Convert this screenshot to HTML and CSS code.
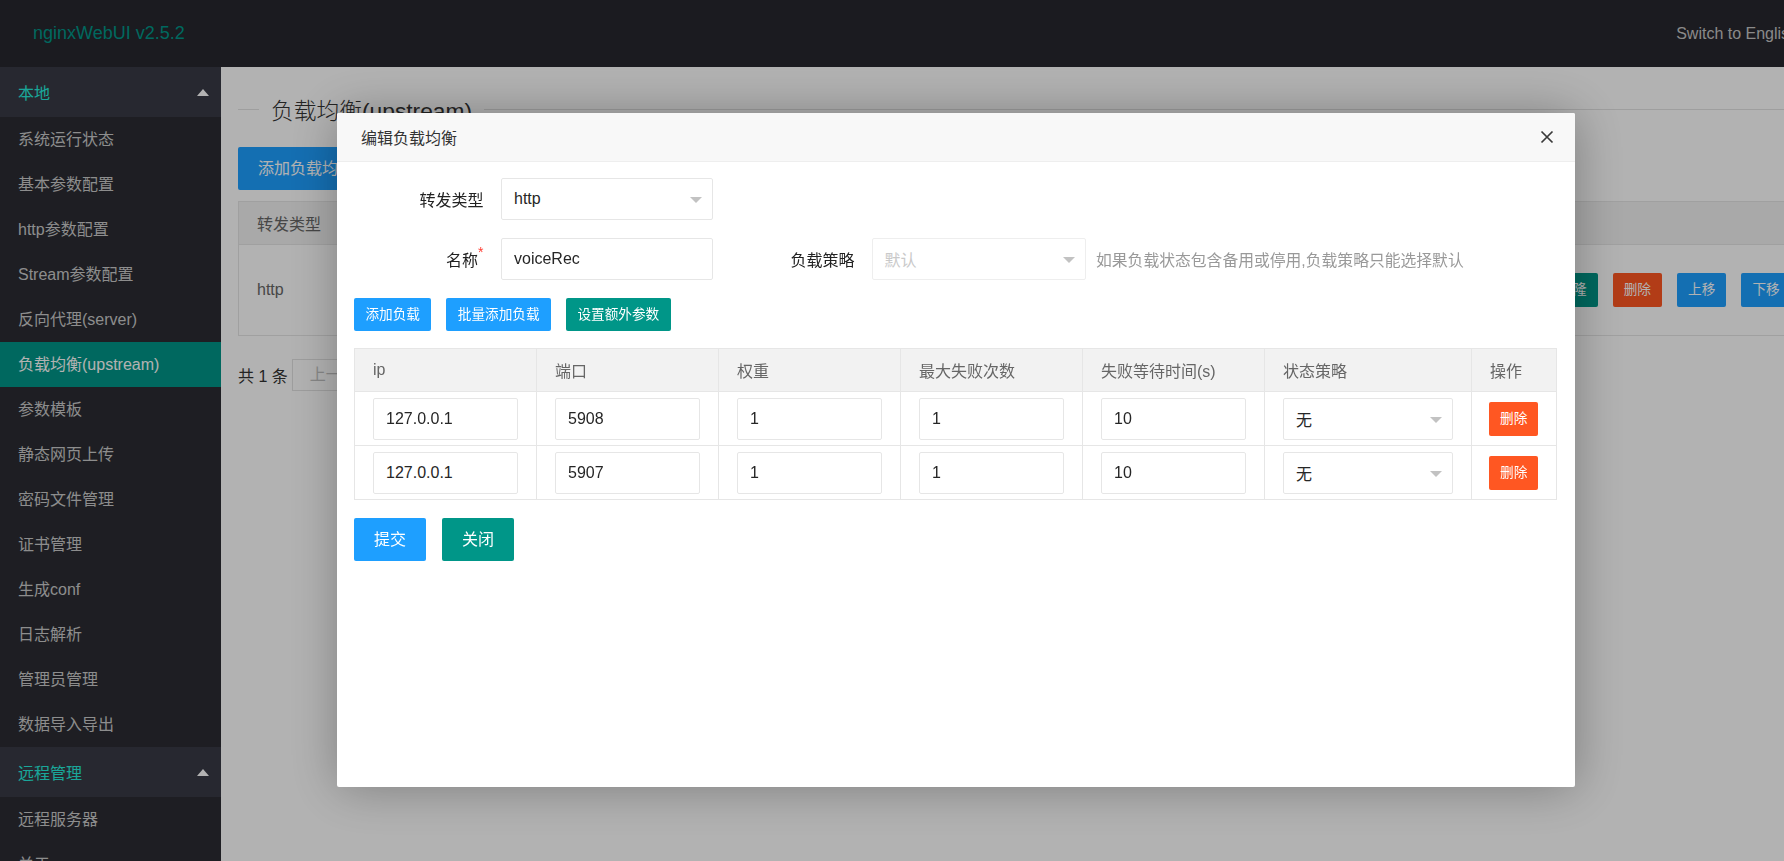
FILE: index.html
```html
<!DOCTYPE html>
<html lang="zh-CN">

<head>
  <meta charset="utf-8">
  <title>nginxWebUI</title>
  <link rel="stylesheet" href="styles.css">
</head>

<body>
  <div class="layout">
    <div class="header">
      <div class="logo">nginxWebUI v2.5.2</div>
      <div class="lang">Switch to English</div>
    </div>

    <div class="side">
      <div class="navTitle">本地</div>
      <div class="navItem">系统运行状态</div>
      <div class="navItem">基本参数配置</div>
      <div class="navItem">http参数配置</div>
      <div class="navItem">Stream参数配置</div>
      <div class="navItem">反向代理(server)</div>
      <div class="navItem active">负载均衡(upstream)</div>
      <div class="navItem">参数模板</div>
      <div class="navItem">静态网页上传</div>
      <div class="navItem">密码文件管理</div>
      <div class="navItem">证书管理</div>
      <div class="navItem">生成conf</div>
      <div class="navItem">日志解析</div>
      <div class="navItem">管理员管理</div>
      <div class="navItem">数据导入导出</div>
      <div class="navTitle">远程管理</div>
      <div class="navItem">远程服务器</div>
      <div class="navItem">关于</div>
    </div>

    <div class="main">
      <div class="pageTitle"><span>负载均衡(upstream)</span></div>
      <div>
        <span class="btn addBtn">添加负载均衡</span>
      </div>
      <table class="listTable">
        <colgroup>
          <col style="width: 220px">
          <col style="width: 400px">
          <col style="width: 300px">
          <col style="width: 307px">
          <col>
        </colgroup>
        <thead>
          <tr>
            <th>转发类型</th>
            <th>名称</th>
            <th>负载策略</th>
            <th>负载节点</th>
            <th>操作</th>
          </tr>
        </thead>
        <tbody>
          <tr>
            <td>http</td>
            <td>voiceRec</td>
            <td>默认</td>
            <td>127.0.0.1:5908</td>
            <td class="opCell">
              <span class="smBtn blue">编辑</span>
              <span class="smBtn teal">克隆</span>
              <span class="smBtn red">删除</span>
              <span class="smBtn blue">上移</span>
              <span class="smBtn blue">下移</span>
            </td>
          </tr>
        </tbody>
      </table>
      <div class="pager">
        <span>共 1 条</span>
        <span class="pageBox">上一页</span>
      </div>
    </div>
  </div>

  <div class="shade"></div>

  <div class="dialog">
    <div class="dialogTitle">
      <span>编辑负载均衡</span>
      <span class="close">
        <svg width="14" height="14" viewBox="0 0 14 14">
          <path d="M1.5 1.5 L12.5 12.5 M12.5 1.5 L1.5 12.5" stroke="#3a3a3a" stroke-width="1.7" fill="none" />
        </svg>
      </span>
    </div>
    <div class="dialogBody">
      <div class="formRow">
        <label class="formLabel">转发类型</label>
        <div class="field select"><span>http</span></div>
      </div>
      <div class="formRow">
        <label class="formLabel">名称<span class="req">*</span></label>
        <input class="field" type="text" value="voiceRec">
        <label class="formLabel wide">负载策略</label>
        <div class="field select disabled"><span>默认</span></div>
        <span class="hint">如果负载状态包含备用或停用,负载策略只能选择默认</span>
      </div>
      <div class="toolBtns">
        <span class="smBtn blue">添加负载</span>
        <span class="smBtn blue">批量添加负载</span>
        <span class="smBtn teal">设置额外参数</span>
      </div>

      <table class="nodeTable">
        <colgroup>
          <col style="width: 182px">
          <col style="width: 182px">
          <col style="width: 182px">
          <col style="width: 182px">
          <col style="width: 182px">
          <col style="width: 207px">
          <col>
        </colgroup>
        <thead>
          <tr>
            <th>ip</th>
            <th>端口</th>
            <th>权重</th>
            <th>最大失败次数</th>
            <th>失败等待时间(s)</th>
            <th>状态策略</th>
            <th>操作</th>
          </tr>
        </thead>
        <tbody>
          <tr>
            <td><input class="field cellField" type="text" value="127.0.0.1"></td>
            <td><input class="field cellField" type="text" value="5908"></td>
            <td><input class="field cellField" type="text" value="1"></td>
            <td><input class="field cellField" type="text" value="1"></td>
            <td><input class="field cellField" type="text" value="10"></td>
            <td><div class="field cellField select"><span>无</span></div></td>
            <td class="opCol"><span class="smBtn red">删除</span></td>
          </tr>
          <tr>
            <td><input class="field cellField" type="text" value="127.0.0.1"></td>
            <td><input class="field cellField" type="text" value="5907"></td>
            <td><input class="field cellField" type="text" value="1"></td>
            <td><input class="field cellField" type="text" value="1"></td>
            <td><input class="field cellField" type="text" value="10"></td>
            <td><div class="field cellField select"><span>无</span></div></td>
            <td class="opCol"><span class="smBtn red">删除</span></td>
          </tr>
        </tbody>
      </table>

      <div class="footBtns">
        <span class="btn blue">提交</span>
        <span class="btn teal">关闭</span>
      </div>
    </div>
  </div>
</body>

</html>
```

FILE: styles.css
```css
html,
body {
  margin: 0;
  padding: 0;
  overflow: hidden;
}

body {
  font-family: "Liberation Sans", "Noto Sans CJK SC", sans-serif;
  font-size: 16px;
  color: #333;
  background: #fff;
}

.layout {
  width: 1830px;
  height: 100vh;
  display: grid;
  grid-template-columns: 221px 1fr;
  grid-template-rows: 67px 1fr;
}

/* top bar */
.header {
  grid-column: 1 / 3;
  display: flex;
  align-items: center;
  justify-content: space-between;
  background: #27282f;
}

.logo {
  padding-left: 33px;
  font-size: 18px;
  color: #009688;
}

.lang {
  padding-right: 33px;
  font-size: 16px;
  color: #c6c6c6;
}

/* left menu */
.side {
  background: #2b2c33;
  overflow: hidden;
}

.navTitle {
  height: 50px;
  display: flex;
  align-items: center;
  justify-content: space-between;
  padding: 0 12px 0 18px;
  background: #383a46;
  color: #26eedd;
}

.navTitle::after {
  content: "";
  width: 0;
  height: 0;
  border-left: 6.5px solid transparent;
  border-right: 6.5px solid transparent;
  border-bottom: 7px solid #fff;
}

.navItem {
  height: 45px;
  line-height: 45px;
  padding-left: 18px;
  color: #cacaca;
  white-space: nowrap;
}

.navItem.active {
  background: #009688;
  color: #fff;
}

/* page behind the dialog */
.main {
  padding: 0 17px;
}

.pageTitle {
  display: flex;
  align-items: center;
  height: 30px;
  margin-top: 27px;
  font-size: 22.75px;
  font-weight: 300;
  color: #333;
}

.pageTitle::before {
  content: "";
  width: 21px;
  border-top: 1px solid #e2e2e2;
}

.pageTitle::after {
  content: "";
  flex: 1;
  border-top: 1px solid #e2e2e2;
}

.pageTitle span {
  padding: 0 12px;
}

.btn {
  display: inline-block;
  height: 43px;
  line-height: 43px;
  padding: 0 20px;
  border-radius: 2px;
  color: #fff;
  font-size: 16px;
  white-space: nowrap;
}

.addBtn {
  margin-top: 23px;
  background: #1e9fff;
}

.listTable {
  width: 1576px;
  margin-top: 11px;
  border-collapse: collapse;
  table-layout: fixed;
}

.listTable th,
.listTable td {
  border: 1px solid #e6e6e6;
  padding: 0 18px;
  text-align: left;
  font-weight: normal;
  color: #666;
  white-space: nowrap;
  overflow: hidden;
}

.listTable th {
  height: 42px;
  background: #f2f2f2;
}

.listTable td {
  height: 90px;
}

.listTable .opCell {
  padding-left: 18px;
}

.smBtn {
  display: inline-block;
  height: 34px;
  line-height: 34px;
  padding: 0 11px;
  border-radius: 2px;
  color: #fff;
  font-size: 13.65px;
  vertical-align: middle;
  white-space: nowrap;
}

.opCell .smBtn + .smBtn {
  margin-left: 10.6px;
}

.blue {
  background: #1e9fff;
}

.teal {
  background: #009688;
}

.red {
  background: #ff5722;
}

.pager {
  display: flex;
  align-items: center;
  margin-top: 23px;
  gap: 4px;
}

.pageBox {
  height: 30px;
  line-height: 30px;
  padding: 0 17px;
  border: 1px solid #e2e2e2;
  color: #c2c2c2;
}

/* modal shade + dialog */
.shade {
  position: fixed;
  left: 0;
  top: 0;
  right: 0;
  bottom: 0;
  background: rgba(0, 0, 0, .3);
}

.dialog {
  position: fixed;
  left: 337px;
  top: 113px;
  width: 1238px;
  height: 674px;
  background: #fff;
  border-radius: 2px;
  box-shadow: 1px 1px 50px rgba(0, 0, 0, .3);
}

.dialogTitle {
  height: 48px;
  display: flex;
  align-items: center;
  padding: 0 21px 0 24px;
  background: #f8f8f8;
  border-bottom: 1px solid #eee;
  border-radius: 2px 2px 0 0;
  color: #333;
}

.close {
  margin-left: auto;
  display: flex;
}

.dialogBody {
  padding: 16px 18px 0 17px;
}

.formRow {
  display: flex;
  align-items: center;
  margin-bottom: 18px;
}

.formLabel {
  width: 147px;
  box-sizing: border-box;
  padding-right: 17.5px;
  text-align: right;
  color: #222;
}

.formLabel.wide {
  width: 158.5px;
  padding-right: 17px;
}

.req {
  color: #ff3b30;
  font-size: 14px;
  vertical-align: top;
  position: relative;
  top: -3px;
}

.field {
  width: 212px;
  height: 42px;
  box-sizing: border-box;
  margin: 0;
  padding: 0 12px;
  border: 1px solid #e6e6e6;
  border-radius: 2px;
  background: #fff;
  font-family: inherit;
  font-size: 16px;
  color: #262626;
  outline: none;
}

.select {
  position: relative;
  display: flex;
  align-items: center;
}

.select::after {
  content: "";
  position: absolute;
  right: 10px;
  top: 18px;
  border-left: 6.5px solid transparent;
  border-right: 6.5px solid transparent;
  border-top: 6.5px solid #c2c2c2;
}

.select.disabled {
  width: 214px;
  border-color: #eee;
  color: #c9c9c9;
}

.hint {
  margin-left: 10.5px;
  font-size: 15.8px;
  color: #999;
  white-space: nowrap;
}

.toolBtns {
  display: flex;
  gap: 15px;
  margin-bottom: 17px;
}

.toolBtns .smBtn {
  height: 33px;
  line-height: 33px;
  padding: 0 11.4px;
}

.nodeTable {
  width: 100%;
  border-collapse: collapse;
  table-layout: fixed;
}

.nodeTable th,
.nodeTable td {
  border: 1px solid #e6e6e6;
  padding: 0 18px;
  text-align: left;
}

.nodeTable th {
  height: 42px;
  background: #f2f2f2;
  font-weight: normal;
  color: #666;
  white-space: nowrap;
}

.nodeTable td {
  height: 53px;
}

.nodeTable td.opCol {
  padding-left: 17px;
}

.cellField {
  width: 100%;
}

.footBtns {
  display: flex;
  gap: 16px;
  margin-top: 18px;
}
```
